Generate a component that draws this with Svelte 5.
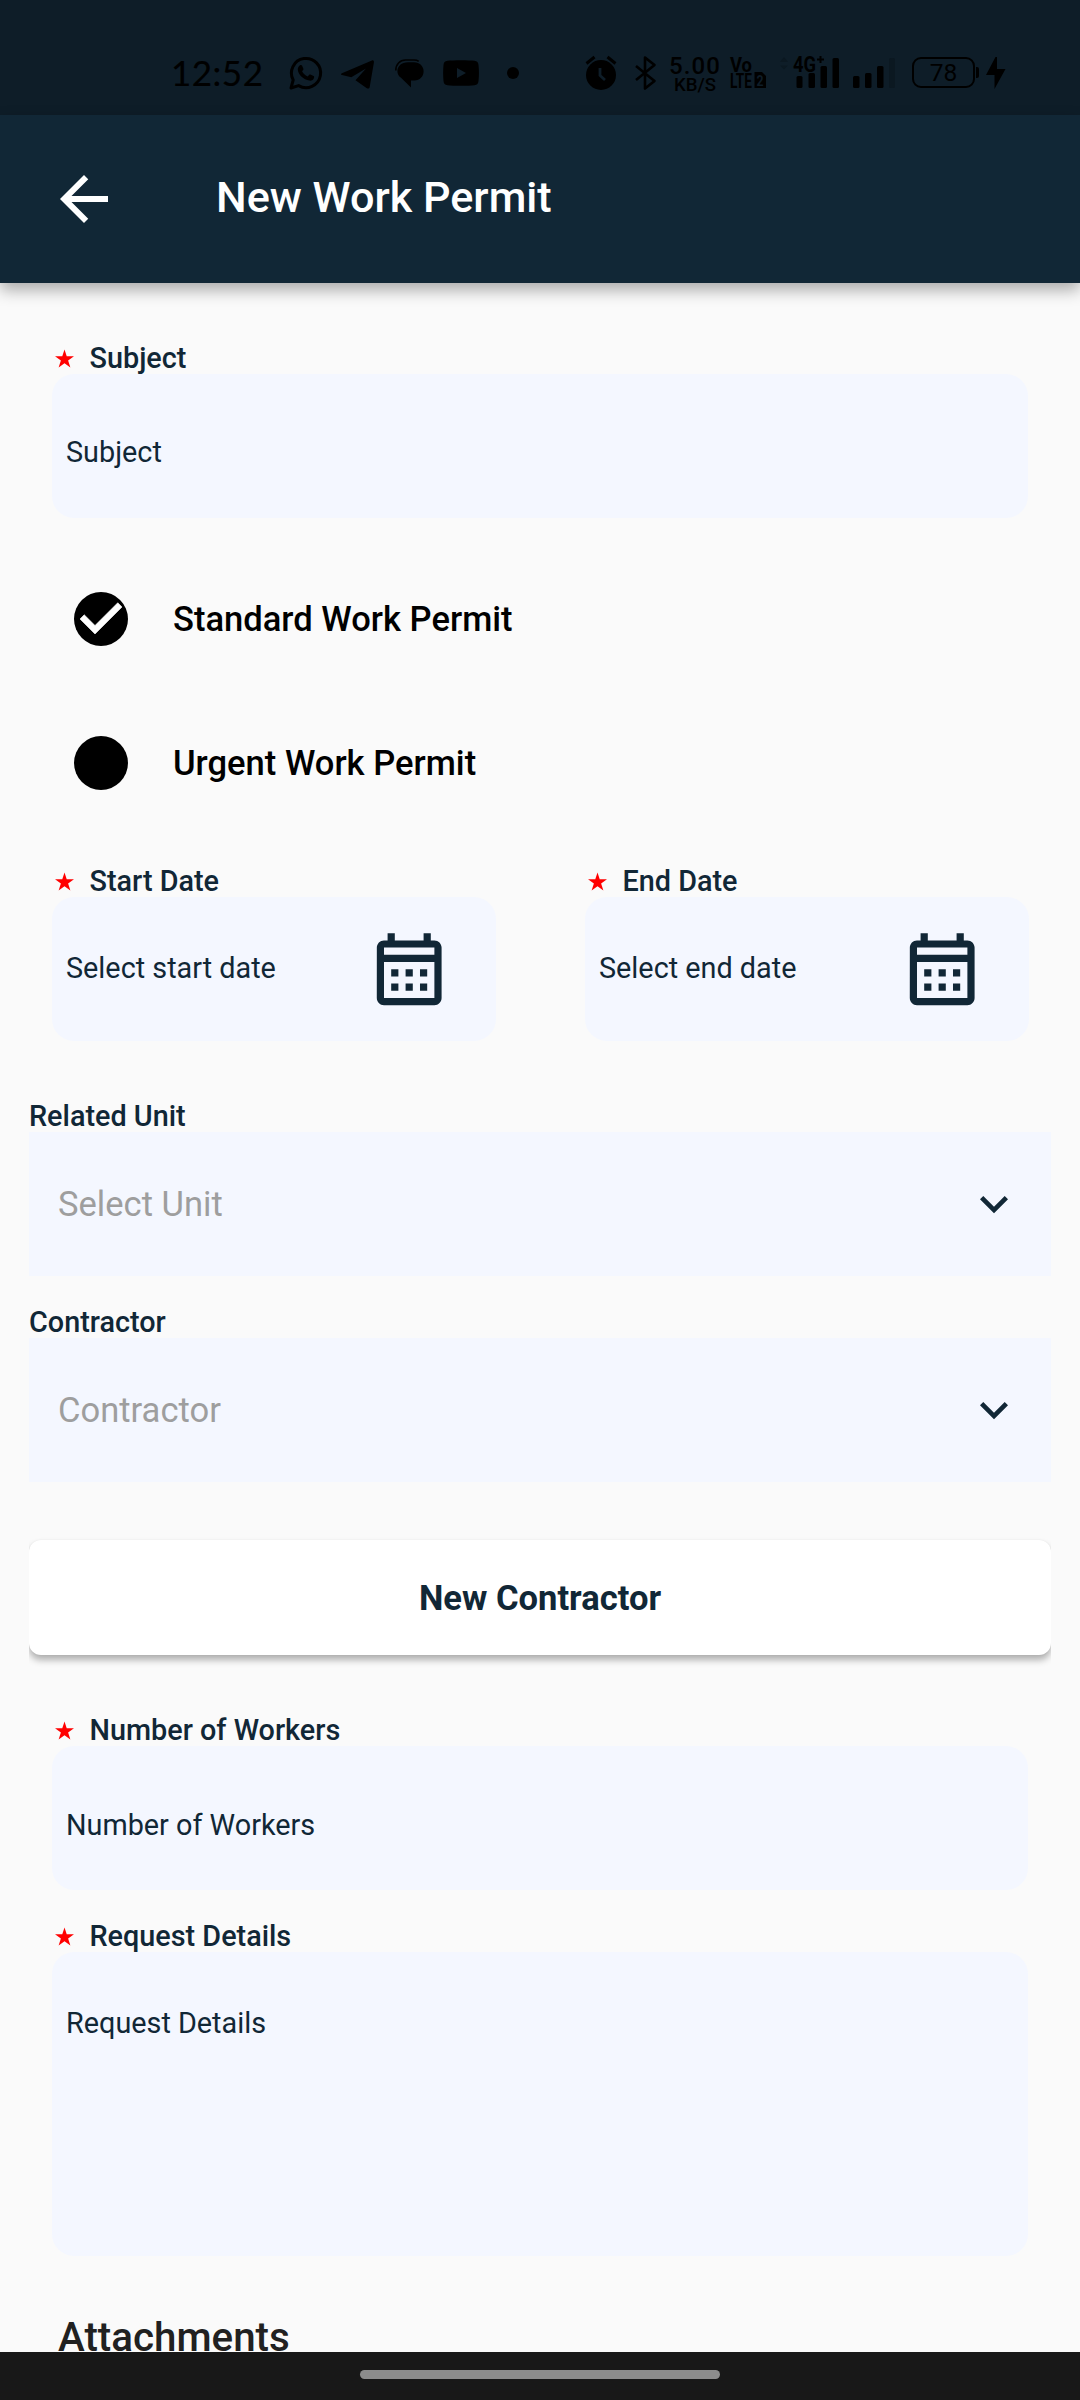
<script>
  const permitTypes = [
    { label: 'Standard Work Permit', checked: true },
    { label: 'Urgent Work Permit', checked: false }
  ];
  const dates = [
    { label: 'Start Date', hint: 'Select start date' },
    { label: 'End Date', hint: 'Select end date' }
  ];
  const selects = [
    { label: 'Related Unit', hint: 'Select Unit' },
    { label: 'Contractor', hint: 'Contractor' }
  ];
</script>

{#snippet requiredLabel(text)}
  <div class="label required">
    <svg class="star" width="19" height="19" viewBox="0 0 20 19"><path fill="#f00" d="M10 0l2.35 7.2H20l-6.2 4.45L16.2 19 10 14.5 3.8 19l2.4-7.35L0 7.2h7.65z" /></svg>
    <span>{text}</span>
  </div>
{/snippet}

<div class="screen">
  <div class="status">
    <span class="time">12:52</span>
    <svg class="whatsapp" width="33" height="34" viewBox="0 0 33 34">
      <path d="M2 32l2.2-8A14.6 14.6 0 1 1 9.6 29.6z" fill="none" stroke="#000" stroke-width="3" stroke-linejoin="round" />
      <path d="M11 9.3c.6-.6 1.7-.5 2 .2l1.4 3.2c.2.5 0 .9-.3 1.3l-1 1.2c1.2 2.4 3 4.1 5.6 5.3l1.5-1.7c.3-.4.8-.5 1.2-.3l3.2 1.6c.6.3.6.7.5 1.3-.5 2.3-2.6 3.5-4.7 3.2-6-.9-11-5.6-11.6-10.8-.2-1.8.8-3.7 2.2-4.5z" />
    </svg>
    <svg class="telegram" width="33" height="29" viewBox="0 0 33 29"><path d="M.9 13.2L30.9.5c1.3-.5 2.3.2 2 2L28.7 27c-.3 1.6-1.6 2-2.9 1.2L14.5 20.3 25 8.5 10.3 17.3 1 15C-.3 14.6-.3 13.7.9 13.2z" /></svg>
    <svg class="bubble" width="29" height="29" viewBox="0 0 29 29">
      <path d="M13 3.3h6C24.5 3.3 28.6 7.2 28.6 12.2c0 5.2-3.8 9.2-9.1 9.2H16V28.5L6 18.8C3.5 17 2.4 14.5 2.4 12.2 2.4 7.2 6.5 3.3 13 3.3z" />
      <path d="M.8 11.5C.6 5.5 5 1 10.5 1H19c2 0 3.500.4 4.700 1.300" fill="none" stroke="#000" stroke-width="1.6" />
    </svg>
    <svg class="youtube" width="36" height="26" viewBox="0 0 36 26"><path fill-rule="evenodd" d="M4.5.8C10 .1 26 .1 31.5.8c2.8.4 3.7 1.7 4 4.2.6 5 .6 11 0 16-.3 2.5-1.2 3.8-4 4.2-5.5.7-21.5.7-27 0C1.7 24.8.8 23.5.5 21 0 16 0 10 .5 5 .8 2.5 1.7 1.2 4.5.8zM14 8v10l9-5z" /></svg>
    <span class="dot"></span>

    <svg class="alarm" width="32" height="36" viewBox="0 0 32 36">
      <circle cx="16" cy="20" r="15" />
      <path d="M1.5 8.5L9.5 2M30.5 8.5L22.5 2" stroke="#000" stroke-width="3" />
      <path d="M15 13v7.5l5 4.5" fill="none" stroke="#0e1d28" stroke-width="2.8" />
    </svg>
    <svg class="bluetooth" width="21" height="36" viewBox="0 0 21 36"><path d="M1 11l18.5 15L10 33.5V2.5L19.5 10 1 25" fill="none" stroke="#000" stroke-width="2.6" stroke-linejoin="round" /></svg>
    <svg class="speed" width="52" height="38" viewBox="0 0 52 38">
      <text class="rate" x="0" y="19.5" textLength="51" lengthAdjust="spacing">5.00</text>
      <text class="unit" x="5" y="36.5" textLength="42" lengthAdjust="spacingAndGlyphs">KB/S</text>
    </svg>
    <svg class="volte" width="37" height="36" viewBox="0 0 37 36">
      <text x="0" y="16.5" textLength="22" lengthAdjust="spacingAndGlyphs">Vo</text>
      <text x="0" y="32.5" textLength="22" lengthAdjust="spacingAndGlyphs">LTE</text>
      <path d="M24.5 17H32l4 4v12H24.500z" />
      <text class="sim" x="26.500" y="30.500" textLength="7" lengthAdjust="spacingAndGlyphs">2</text>
    </svg>
    <svg class="signal" width="61" height="36" viewBox="0 0 61 36">
      <path d="M2 7l4-5 4 5zM2 10.5l4 4 4-4z" fill="#0b1821" />
      <text class="net" x="15" y="16.5" textLength="23" lengthAdjust="spacingAndGlyphs">4G</text>
      <path d="M42.5 1v7M39 4.5h7" stroke="#000" stroke-width="2" />
      <rect x="18.5" y="21" width="6" height="12" rx="1.5" />
      <rect x="30.5" y="18" width="6.5" height="15" rx="1.5" />
      <rect x="42.5" y="11" width="6.5" height="22" rx="1.5" />
      <rect x="54.5" y="3" width="6.5" height="30" rx="1.5" />
    </svg>
    <svg class="signal-two" width="42" height="36" viewBox="0 0 42 36">
      <rect x="0" y="21" width="6.5" height="12" rx="1.5" />
      <rect x="12" y="18" width="6.5" height="15" rx="1.5" />
      <rect x="24" y="11" width="6.5" height="22" rx="1.5" />
      <rect x="36" y="3" width="6" height="30" rx="1.5" fill="#0b1821" />
    </svg>
    <div class="battery"><span>78</span></div>
    <svg class="bolt" width="20" height="32" viewBox="0 0 20 32"><path d="M9.5 0L0 18h8.5v14L19.5 12H11V0z" /></svg>
  </div>

  <header>
    <svg width="72" height="72" viewBox="0 0 24 24"><path fill="#fff" d="M20 11H7.830l5.590-5.590L12 4l-8 8 8 8 1.410-1.410L7.830 13H20v-2z" /></svg>
    <h1>New Work Permit</h1>
  </header>

  <main>
    <section class="inset">
      {@render requiredLabel('Subject')}
      <div class="field"><span>Subject</span></div>
    </section>

    <div class="radios">
      {#each permitTypes as type}
        <div class="radio">
          <span class="disc">
            {#if type.checked}
              <svg width="54" height="54" viewBox="3 3 18 18"><path fill="#fff" stroke="#fff" stroke-width=".2" d="M10 17l-5-5 1.410-1.410L10 14.170l7.590-7.590L19 8z" /></svg>
            {/if}
          </span>
          <span>{type.label}</span>
        </div>
      {/each}
    </div>

    <div class="dates">
      {#each dates as date}
        <section>
          {@render requiredLabel(date.label)}
          <div class="field date">
            <span>{date.hint}</span>
            <svg width="86.4" height="86.4" viewBox="0 0 24 24"><path fill="#112736" d="M19 4h-1V2h-2v2H8V2H6v2H5c-1.110 0-1.990.9-1.990 2L3 20c0 1.100.89 2 2 2h14c1.100 0 2-.9 2-2V6c0-1.100-.9-2-2-2zm0 16H5V10h14v10zm0-12H5V6h14v2zM9 14H7v-2h2v2zm4 0h-2v-2h2v2zm4 0h-2v-2h2v2zm-8 4H7v-2h2v2zm4 0h-2v-2h2v2zm4 0h-2v-2h2v2z" /></svg>
          </div>
        </section>
      {/each}
    </div>

    <div class="selects">
      {#each selects as select}
        <section>
          <div class="label">{select.label}</div>
          <div class="select">
            <span>{select.hint}</span>
            <svg width="56" height="56" viewBox="0 0 24 24"><path fill="#112736" d="M7.410 8.590L12 13.170l4.590-4.580L18 10l-6 6-6-6z" /></svg>
          </div>
        </section>
      {/each}
    </div>

    <button>New Contractor</button>

    <section class="inset">
      {@render requiredLabel('Number of Workers')}
      <div class="field workers"><span>Number of Workers</span></div>
    </section>
    <section class="inset details">
      {@render requiredLabel('Request Details')}
      <div class="field area"><span>Request Details</span></div>
    </section>

    <h2>Attachments</h2>
  </main>

  <footer><span></span></footer>
</div>

<style>
  :global(body) { margin: 0; background: #fafafa; }
  .screen {
    width: 1080px;
    height: 2400px;
    display: flex;
    flex-direction: column;
    overflow: hidden;
    background: #fafafa;
    color: #112736;
    font-family: Roboto, sans-serif;
  }
  svg { display: block; flex: none; overflow: visible; }

  .status {
    flex: none;
    box-sizing: border-box;
    height: 115px;
    padding: 30px 0 0 171px;
    display: flex;
    align-items: center;
    background: #0e1d28;
    color: #000;
  }
  .time { width: 92px; margin-bottom: 2px; font: 400 35px/40px Lato, sans-serif; letter-spacing: .5px; white-space: nowrap; -webkit-text-stroke: .2px #000; }
  .whatsapp { margin-left: 26px; }
  .telegram { margin: 3px 0 0 19px; }
  .bubble { margin: 1px 0 0 21px; }
  .youtube { margin-left: 19px; }
  .dot { width: 12px; height: 12px; margin: 0 66px 0 28px; border-radius: 50%; background: #000; flex: none; }
  .bluetooth { margin-left: 18px; }
  .speed { margin-left: 13px; }
  .rate { font: 500 24px Roboto, sans-serif; }
  .unit { font: 500 18px Roboto, sans-serif; }
  .volte { margin-left: 9px; font: 700 20px Roboto, sans-serif; }
  .volte .sim { font-size: 15px; fill: #0e1d28; }
  .signal { margin-left: 11px; }
  .net { font: 700 22px Roboto, sans-serif; }
  .signal-two { margin-left: 14px; }
  .battery {
    position: relative;
    box-sizing: border-box;
    width: 63px;
    height: 31px;
    margin: 0 11px 0 17px;
    border: 2px solid #000;
    border-radius: 9px;
    text-align: center;
    font: 400 24.5px/27px Roboto, sans-serif;
  }
  .battery::after { content: ''; position: absolute; right: -6px; top: 8px; width: 3px; height: 11px; border-radius: 0 2px 2px 0; background: #000; }

  header {
    flex: none;
    position: relative;
    z-index: 1;
    box-sizing: border-box;
    height: 168px;
    padding-left: 48px;
    display: flex;
    align-items: center;
    gap: 96px;
    background: #112736;
    color: #fff;
    box-shadow: 0 7px 15px rgba(0, 0, 0, .32);
  }
  h1 { margin: 0 0 3px; font-size: 43.2px; line-height: 50px; font-weight: 500; white-space: nowrap; }

  main { flex: 1; min-height: 0; overflow: hidden; padding: 58px 29px 0; display: flex; flex-direction: column; }
  main > * { flex: none; }
  .inset { margin: 0 23px; }
  .label { box-sizing: border-box; height: 33px; padding-top: 1px; font-size: 28.8px; line-height: 33px; font-weight: 500; white-space: nowrap; }
  .required { display: flex; gap: 15.5px; padding-left: 3px; }
  .star { margin-top: 7px; }
  .field {
    box-sizing: border-box;
    height: 144px;
    padding: 12px 14px 0;
    border-radius: 22px;
    display: flex;
    align-items: center;
    background: #f4f7ff;
    font-size: 28.8px;
    line-height: 34px;
    white-space: nowrap;
  }
  .workers { padding-top: 14px; }
  .radios { margin: 29px 45px; }
  .radio { height: 144px; display: flex; align-items: center; gap: 45px; color: #000; font-size: 34.56px; font-weight: 500; line-height: 42px; }
  .disc { width: 54px; height: 54px; border-radius: 50%; background: #000; }
  .dates { display: grid; grid-template-columns: 444px 444px; gap: 89px; margin: 0 23px; }
  .date { padding: 0 44px 0 14px; justify-content: space-between; }
  .date span { margin-bottom: 3px; }
  .selects { display: flex; flex-direction: column; gap: 29px; margin: 58px 0; }
  .select {
    box-sizing: border-box;
    height: 144px;
    padding: 0 29px;
    display: flex;
    align-items: center;
    justify-content: space-between;
    background: #f4f7ff;
    color: #9e9e9e;
    font-size: 34.56px;
    line-height: 42px;
  }
  .select svg { margin-bottom: 1px; }
  button {
    height: 115px;
    margin: 0 0 58px;
    padding: 1px 0 0;
    border: 0;
    border-radius: 12px;
    background: #fff;
    color: #112736;
    font: 700 34.56px/42px Roboto, sans-serif;
    box-shadow: 0 5px 7px rgba(0, 0, 0, .3), 0 0 2px rgba(0, 0, 0, .06);
    clip-path: inset(-10px 0 -24px 0);
  }
  .details { margin-top: 29px; }
  .area { height: 304px; padding-top: 54px; align-items: flex-start; }
  h2 { margin: 56px 0 0 29px; color: #212121; font-size: 40.32px; font-weight: 500; line-height: 52px; }

  footer { flex: none; height: 48px; display: flex; justify-content: center; background: #181818; }
  footer span { width: 360px; height: 9px; margin-top: 18px; border-radius: 5px; background: #8c8c8c; }
</style>
